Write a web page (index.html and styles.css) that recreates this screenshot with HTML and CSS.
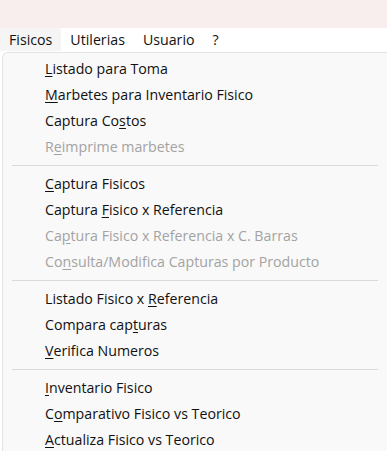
FILE: index.html
```html
<!DOCTYPE html>
<html lang="es">
<head>
  <meta charset="UTF-8">
  <title>Fisicos</title>
  <link rel="stylesheet" href="styles.css">
</head>
<body>
  <div class="title-band"></div>
  <nav class="menu-bar">
    <span class="menu-title active">Fisicos</span>
    <span class="menu-title">Utilerias</span>
    <span class="menu-title">Usuario</span>
    <span class="menu-title">?</span>
  </nav>

  <ul class="dropdown">
    <li class="item"><u>L</u>istado para Toma</li>
    <li class="item"><u>M</u>arbetes para Inventario Fisico</li>
    <li class="item">Captura Co<u>s</u>tos</li>
    <li class="item disabled">R<u>e</u>imprime marbetes</li>
    <li class="separator"></li>
    <li class="item"><u>C</u>aptura Fisicos</li>
    <li class="item">Captura <u>F</u>isico x Referencia</li>
    <li class="item disabled">Ca<u>p</u>tura Fisico x Referencia x C. Barras</li>
    <li class="item disabled">Co<u>n</u>sulta/Modifica Capturas por Producto</li>
    <li class="separator"></li>
    <li class="item">Listado Fisico x <u>R</u>eferencia</li>
    <li class="item">Compara cap<u>t</u>uras</li>
    <li class="item"><u>V</u>erifica Numeros</li>
    <li class="separator"></li>
    <li class="item"><u>I</u>nventario Fisico</li>
    <li class="item">C<u>o</u>mparativo Fisico vs Teorico</li>
    <li class="item"><u>A</u>ctualiza Fisico vs Teorico</li>
  </ul>
</body>
</html>
```

FILE: styles.css
```css
body {
  font-family: "Open Sans", "Noto Sans", sans-serif;
  font-size: 14.2px;
  color: #111111;
  background-color: #ffffff;
  margin: 0;
  height: 451px;
  overflow: hidden;
}
.title-band {
  height: 28px;
  background-color: #f9eeee;
}
.menu-bar {
  display: flex;
  height: 23px;
  align-items: center;
  background-color: #ffffff;
}
.menu-title {
  height: 23px;
  line-height: 23px;
  padding: 0 9px 0 9px;
}
.menu-title.active { background-color: #f5f5f5; }

.dropdown {
  list-style: none;
  margin: 1px 0 0 2px;
  padding: 3px 0 0 0;
  height: 395px;
  background-color: #f9f9f9;
  border: 1px solid #e3e3e3;
  border-right: none;
  border-bottom: none;
  border-top-left-radius: 6px;
  overflow: hidden;
}
.item {
  height: 26px;
  line-height: 26px;
  padding-left: 42px;
  white-space: nowrap;
}
.item u { text-underline-offset: 2px; }
.disabled { color: #a3a3a3; }
.separator {
  height: 11px;
  display: flex;
  align-items: center;
  padding: 0 9px 0 9px;
}
.separator::before {
  content: "";
  flex: 1;
  border-top: 1px solid #d9d9d9;
}
```
